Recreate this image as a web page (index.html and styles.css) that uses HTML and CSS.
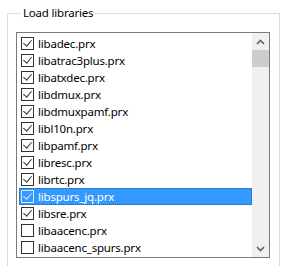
FILE: index.html
```html
<!DOCTYPE html>
<html lang="en">
<head>
    <meta charset="UTF-8">
    <title>Load libraries</title>
    <link rel="stylesheet" href="styles.css">
</head>
<body>
    <fieldset class="group">
        <legend>Load libraries</legend>
        <div class="listbox">
            <ul class="items">
                <li class="item"><span class="check on"></span>libadec.prx</li>
                <li class="item"><span class="check on"></span>libatrac3plus.prx</li>
                <li class="item"><span class="check on"></span>libatxdec.prx</li>
                <li class="item"><span class="check on"></span>libdmux.prx</li>
                <li class="item"><span class="check on"></span>libdmuxpamf.prx</li>
                <li class="item"><span class="check on"></span>libl10n.prx</li>
                <li class="item"><span class="check on"></span>libpamf.prx</li>
                <li class="item"><span class="check on"></span>libresc.prx</li>
                <li class="item"><span class="check on"></span>librtc.prx</li>
                <li class="item selected"><span class="check on"></span>libspurs_jq.prx</li>
                <li class="item"><span class="check on"></span>libsre.prx</li>
                <li class="item"><span class="check"></span>libaacenc.prx</li>
                <li class="item"><span class="check"></span>libaacenc_spurs.prx</li>
            </ul>
            <div class="scrollbar">
                <div class="arrow">
                    <svg width="9" height="6" viewBox="0 0 9 6"><path d="M1 5 L4.5 1.5 L8 5" fill="none" stroke="#606060" stroke-width="1.6"/></svg>
                </div>
                <div class="thumb"></div>
                <div class="track"></div>
                <div class="arrow">
                    <svg width="9" height="6" viewBox="0 0 9 6"><path d="M1 1 L4.5 4.5 L8 1" fill="none" stroke="#606060" stroke-width="1.6"/></svg>
                </div>
            </div>
        </div>
    </fieldset>
</body>
</html>
```

FILE: styles.css
```css
body {
    margin: 0;
    background: #fff;
    font-family: "Noto Sans", Arial, sans-serif;
    font-size: 11.5px;
    letter-spacing: -0.2px;
    color: #000;
    overflow: hidden;
}

.group {
    margin: 5px 0 0 7px;
    width: 273px;
    height: 262px;
    padding: 11px 0 0 8px;
    border: 1px solid #dcdcdc;
    box-sizing: border-box;
}

.group legend {
    padding: 0 2px;
    margin-left: 5px;
    line-height: 16px;
}

.listbox {
    display: flex;
    width: 254px;
    height: 226px;
    border: 1px solid #7a7a7a;
    box-sizing: border-box;
}

.items {
    flex: 1;
    list-style: none;
    margin: 0;
    padding: 2px 0 0 2px;
    overflow: hidden;
}

.item {
    display: flex;
    align-items: center;
    height: 17px;
    padding-left: 2px;
    white-space: nowrap;
}

.item.selected {
    background: #3399ff;
    color: #fff;
    outline: 1px dotted #2a5c8a;
    outline-offset: -1px;
}

.check {
    width: 13px;
    height: 13px;
    margin-right: 4px;
    border: 1px solid #333;
    box-sizing: border-box;
    position: relative;
}

.check.on::after {
    content: "";
    position: absolute;
    left: 3px;
    top: 0px;
    width: 4px;
    height: 7px;
    border: solid #333;
    border-width: 0 1px 1px 0;
    transform: rotate(40deg);
}

.selected .check {
    border-color: #d6e8fb;
}

.selected .check.on::after {
    border-color: #d6e8fb;
}

.scrollbar {
    width: 17px;
    display: flex;
    flex-direction: column;
    background: #f0f0f0;
}

.arrow {
    height: 17px;
    display: flex;
    align-items: center;
    justify-content: center;
}

.thumb {
    height: 17px;
    background: #cdcdcd;
}

.track {
    flex: 1;
}
```
